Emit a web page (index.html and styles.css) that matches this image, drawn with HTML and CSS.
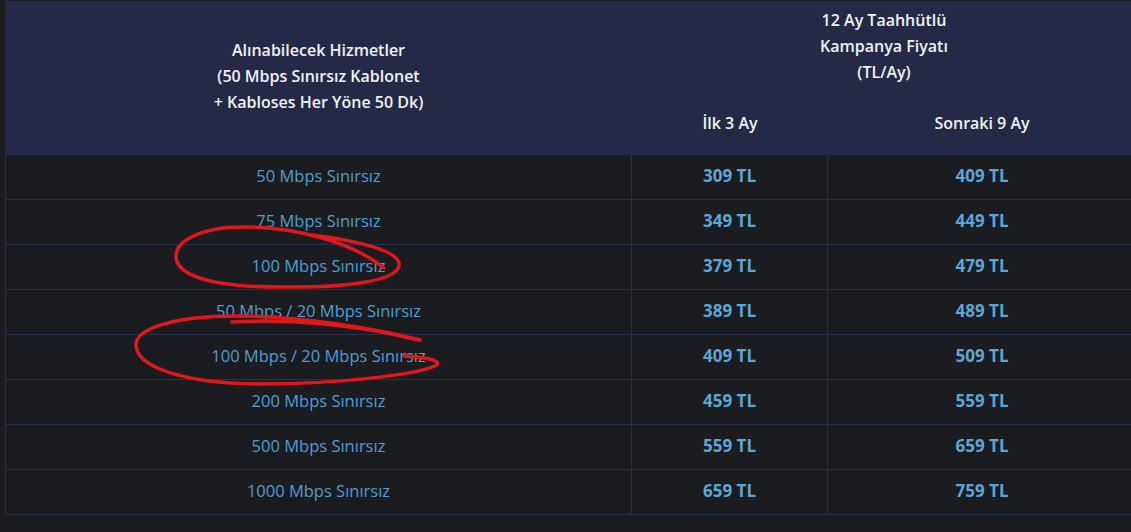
FILE: index.html
```html
<!DOCTYPE html>
<html lang="tr">
<head>
<meta charset="utf-8">
<link rel="stylesheet" href="styles.css">
</head>
<body>
<div class="page">
<table class="prices">
  <colgroup>
    <col class="c1"><col class="c2"><col class="c3">
  </colgroup>
  <thead>
    <tr class="h1">
      <th rowspan="2" class="services">Alınabilecek Hizmetler<br>(50 Mbps Sınırsız Kablonet<br>+ Kabloses Her Yöne 50 Dk)</th>
      <th colspan="2" class="campaign">12 Ay Taahhütlü<br>Kampanya Fiyatı<br>(TL/Ay)</th>
    </tr>
    <tr class="h2">
      <th>İlk 3 Ay</th>
      <th>Sonraki 9 Ay</th>
    </tr>
  </thead>
  <tbody>
    <tr><td>50 Mbps Sınırsız</td><td class="p">309 TL</td><td class="p">409 TL</td></tr>
    <tr><td>75 Mbps Sınırsız</td><td class="p">349 TL</td><td class="p">449 TL</td></tr>
    <tr><td>100 Mbps Sınırsız</td><td class="p">379 TL</td><td class="p">479 TL</td></tr>
    <tr><td>50 Mbps / 20 Mbps Sınırsız</td><td class="p">389 TL</td><td class="p">489 TL</td></tr>
    <tr><td>100 Mbps / 20 Mbps Sınırsız</td><td class="p">409 TL</td><td class="p">509 TL</td></tr>
    <tr><td>200 Mbps Sınırsız</td><td class="p">459 TL</td><td class="p">559 TL</td></tr>
    <tr><td>500 Mbps Sınırsız</td><td class="p">559 TL</td><td class="p">659 TL</td></tr>
    <tr><td>1000 Mbps Sınırsız</td><td class="p">659 TL</td><td class="p">759 TL</td></tr>
  </tbody>
</table>
<svg class="marks" width="1131" height="532" viewBox="0 0 1131 532" aria-hidden="true">
  <path d="M312 235 C352 240, 402 250, 399 266 C396 282, 340 287, 296 287 C236 288, 186 282, 177 262 C170 240, 204 227, 244 227 C296 227, 352 242, 384 268"/>
  <path d="M420 340 C372 328, 300 316, 236 316 C176 316, 136 328, 136 345 C136 366, 182 384, 262 384 C342 384, 420 374, 437 365 C441 360, 424 357, 404 356"/>
  <path d="M232 322 C300 318, 372 328, 418 340"/>
</svg>
</div>
</body>
</html>
```
FILE: styles.css
```css
html, body {
  margin: 0;
  padding: 0;
  background: #1c1d20;
  overflow: hidden;
}
.page {
  position: relative;
  width: 1131px;
  height: 532px;
  padding: 1px 0 0 5px;
  box-sizing: border-box;
}
.prices {
  border-collapse: separate;
  border-spacing: 0;
  table-layout: fixed;
  width: 1131px;
  font-family: "Open Sans", Lato, sans-serif;
  font-size: 16px;
}
.c1 { width: 627px; }
.c2 { width: 196px; }
.c3 { width: 308px; }
thead th {
  background: #242948;
  color: #f2f2f4;
  font-weight: 600;
  line-height: 26px;
  padding: 0;
  text-align: center;
}
.services {
  vertical-align: middle;
  padding-bottom: 4px;
}
.h1 .campaign {
  padding: 6px 0 12px;
}
.h2 th {
  padding: 13px 0 19px;
}
tbody td {
  background: #1b1c1f;
  color: #4f9ed6;
  font-size: 16.5px;
  text-align: center;
  line-height: 42px;
  padding: 0 0 2px;
  border-right: 1px solid #283152;
  border-bottom: 1px solid #283152;
}
tbody td:first-child {
  border-left: 1px solid #283152;
}
tbody td:last-child {
  border-right: none;
}
tbody td.p {
  font-size: 17px;
  font-weight: 700;
  color: #5aa6d8;
}
.marks {
  position: absolute;
  left: 0;
  top: 0;
  pointer-events: none;
  fill: none;
  stroke: #e0171c;
  stroke-width: 3.5;
  stroke-linecap: round;
  stroke-linejoin: round;
}
```
